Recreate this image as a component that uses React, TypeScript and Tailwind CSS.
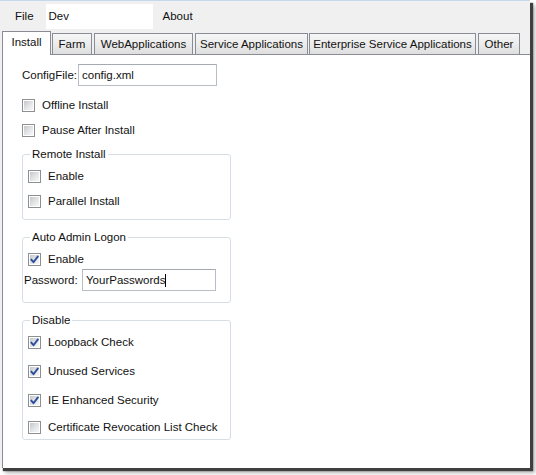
import React from "react";

const Check = ({ checked }: { checked?: boolean }) => (
  <span className="relative flex h-[13px] w-[13px] shrink-0 border border-[#8e8f8f] bg-white p-[1px]">
    <span className="flex-1 bg-linear-to-br from-[#c4c7cc] via-[#e2e3e5] to-[#f8f8f8]" />
    {checked && (
      <svg className="absolute left-0 top-0" width="11" height="11" viewBox="0 0 11 11">
        <path
          d="M2.3 5.6 L4.5 8.2 L8.9 2.4"
          fill="none"
          stroke="#2c4c9f"
          strokeWidth="1.9"
          strokeLinecap="round"
          strokeLinejoin="round"
        />
      </svg>
    )}
  </span>
);

const CheckRow = ({
  label,
  checked,
  className,
}: {
  label: string;
  checked?: boolean;
  className?: string;
}) => (
  <div className={`flex h-[20px] items-center ${className ?? ""}`}>
    <Check checked={checked} />
    <span className="ml-[7px]">{label}</span>
  </div>
);

const Tab = ({ label, className }: { label: string; className: string }) => (
  <div
    className={`flex h-[21px] items-center justify-center border border-b-0 border-[#898c95] bg-linear-to-b from-[#f6f6f6] via-[#ececec] to-[#dedede] ${className}`}
  >
    {label}
  </div>
);

export default function App() {
  return (
    <div className="h-[475px] w-[536px] overflow-hidden bg-white font-['Liberation_Sans',Arial,sans-serif] text-[11.5px] leading-[14px] text-[#111]">
      <div className="flex h-[468px] w-[530px] flex-col border-t border-[#c5d8ee] bg-[#f0f0f0] shadow-[3px_3px_1px_#3f3f3f,5px_5px_4px_rgba(0,0,0,0.3)]">
        {/* Menu bar */}
        <div className="flex h-[30px] shrink-0 items-center pl-[15px]">
          <span>File</span>
          <div className="ml-[12px] flex h-[25px] w-[107px] items-center bg-white pl-[3px]">Dev</div>
          <span className="ml-[10px]">About</span>
        </div>

        {/* Tabs */}
        <div className="flex h-[23px] shrink-0 items-end pl-[2px]">
          <div className="relative z-10 -mb-px flex h-[24px] w-[49px] items-center justify-center border border-b-0 border-[#898c95] bg-white pb-[3px]">
            Install
          </div>
          <Tab label="Farm" className="ml-[1px] w-[40px]" />
          <Tab label="WebApplications" className="ml-[2px] w-[99px]" />
          <Tab label="Service Applications" className="ml-[2px] w-[113px]" />
          <Tab label="Enterprise Service Applications" className="ml-[1px] w-[167px]" />
          <Tab label="Other" className="ml-[2px] w-[42px]" />
        </div>

        {/* Panel */}
        <div className="ml-[2px] flex-1 border-l border-t border-[#898c95] bg-white pl-[19px] pt-[9px]">
          <div className="flex h-[22px] items-center">
            <span className="w-[56px]">ConfigFile:</span>
            <div className="flex h-[22px] w-[139px] items-center border border-[#b9bdc5] border-t-[#a5a9b2] pl-[3px]">
              config.xml
            </div>
          </div>

          <CheckRow label="Offline Install" className="mt-[9px]" />
          <CheckRow label="Pause After Install" className="mt-[5px]" />

          <fieldset className="mt-[7px] w-[209px] rounded-[3px] border border-[#d5dfe5] pb-[8px] pl-[5px]">
            <legend className="ml-[2px] px-[2px] leading-[14px]">Remote Install</legend>
            <CheckRow label="Enable" className="mt-[5px]" />
            <CheckRow label="Parallel Install" className="mt-[5px]" />
          </fieldset>

          <fieldset className="mt-[10px] w-[209px] rounded-[3px] border border-[#d5dfe5] pb-[11px] pl-[5px]">
            <legend className="ml-[2px] px-[2px] leading-[14px]">Auto Admin Logon</legend>
            <CheckRow label="Enable" checked className="mt-[5px]" />
            <div className="-ml-[4px] flex h-[22px] items-center">
              <span className="w-[58px]">Password:</span>
              <div className="flex h-[22px] w-[134px] items-center border border-[#b9bdc5] border-t-[#a5a9b2] pl-[3px]">
                <span>YourPasswords</span>
                <span className="inline-block h-[13px] w-px bg-black" />
              </div>
            </div>
          </fieldset>

          <fieldset className="mt-[10px] w-[209px] rounded-[3px] border border-[#d5dfe5] pb-[2px] pl-[5px]">
            <legend className="ml-[2px] px-[2px] leading-[14px]">Disable</legend>
            <CheckRow label="Loopback Check" checked className="mt-[5px]" />
            <CheckRow label="Unused Services" checked className="mt-[9px]" />
            <CheckRow label="IE Enhanced Security" checked className="mt-[9px]" />
            <CheckRow label="Certificate Revocation List Check" className="mt-[7px]" />
          </fieldset>
        </div>
      </div>
    </div>
  );
}
